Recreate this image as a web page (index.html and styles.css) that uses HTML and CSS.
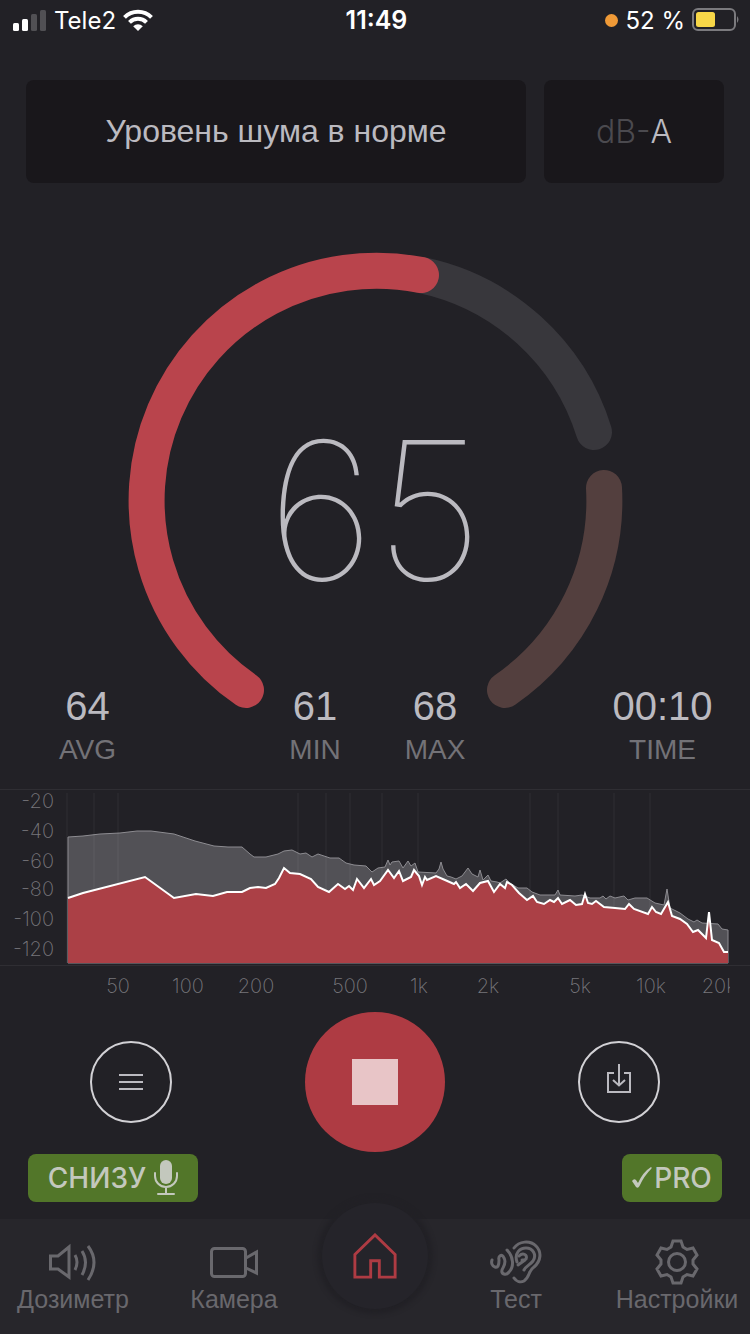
FILE: index.html
```html
<!DOCTYPE html>
<html lang="ru">
<head>
  <meta charset="UTF-8" />
  <meta name="viewport" content="width=device-width, initial-scale=1.0"/>
  <title>Шумомер</title>
  <link rel="stylesheet" href="styles.css">
</head>
<body>
<div class="app">

  <div class="status-bar">
    <div class="status-left">
      <svg width="34" height="22" viewBox="0 0 34 22" aria-hidden="true">
        <g fill="#fff">
          <rect x="0" y="14" width="6" height="8" rx="1.5"/>
          <rect x="9" y="10" width="6" height="12" rx="1.5"/>
        </g>
        <g fill="#515054">
          <rect x="18" y="5" width="6" height="17" rx="1.5"/>
          <rect x="27" y="1" width="6" height="21" rx="1.5"/>
        </g>
      </svg>
      <span>Tele2</span>
      <svg width="30" height="22" viewBox="0 0 30 22" aria-hidden="true">
        <g fill="none" stroke="#fff" stroke-width="4">
          <path d="M1.5 8.300 A19 19 0 0 1 28.500 8.300"/>
          <path d="M6.500 13.300 A12 12 0 0 1 23.500 13.300"/>
        </g>
        <path d="M15 22 L10.200 17.200 A7 7 0 0 1 19.800 17.200 Z" fill="#fff"/>
      </svg>
    </div>
    <div class="clock">11:49</div>
    <div class="status-right">
      <span class="mic-dot"></span>
      <span>52 %</span>
      <svg width="48" height="24" viewBox="0 0 48 24" aria-hidden="true">
        <rect x="1" y="1" width="42" height="21" rx="5" fill="none" stroke="#7b7a7e" stroke-width="2"/>
        <path d="M45 8 Q48 11.500 45 15 Z" fill="#7b7a7e"/>
        <rect x="4" y="4" width="19" height="15" rx="2.500" fill="#f8d748"/>
      </svg>
    </div>
  </div>

  <div class="header">
    <div class="panel level">Уровень шума в норме</div>
    <button class="panel weighting"><span class="dim">dB-</span>A</button>
  </div>

  <div class="gauge">
    <svg viewBox="0 0 500 460" aria-hidden="true">
      <g fill="none" stroke-width="36" stroke-linecap="round">
        <path class="arc-rest" d="M296 25 A230 230 0 0 1 469 182"/>
        <path class="arc-danger" d="M479 238 A230 230 0 0 1 380 440"/>
        <path class="arc-value" d="M121 440 A230 230 0 0 1 296 25"/>
      </g>
    </svg>
    <div class="gauge-value">65</div>
  </div>

  <dl class="stats">
    <div class="stat avg"><dt>AVG</dt><dd>64</dd></div>
    <div class="stat min"><dt>MIN</dt><dd>61</dd></div>
    <div class="stat max"><dt>MAX</dt><dd>68</dd></div>
    <div class="stat time"><dt>TIME</dt><dd>00:10</dd></div>
  </dl>

  <svg class="chart" viewBox="0 0 750 212" role="img" aria-label="Спектр">
    <path class="frame" d="M0 .5 H750 M0 176.500 H750"/>
    <path class="area-peak" d="M68 48 L83 47 L100 45 L120 44 L137 42 L151 42 L174 45 L195 52 L214 57 L228 58 L242 58 L250 65 L254 68 L266 68 L278 65 L284 62 L292 61 L300 65 L306 64 L312 68 L318 65 L330 69 L339 69 L346 74 L354 76 L366 77 L372 83 L378 79 L385 78 L388 71 L390 76 L392 73 L399 72 L403 79 L408 72 L411 77 L415 74 L418 83 L436 84 L439 80 L441 73 L443 80 L447 87 L451 88 L456 90 L462 87 L468 79 L472 85 L478 88 L480 81 L483 91 L488 86 L491 92 L497 93 L500 94 L506 90 L510 94 L518 99 L527 99 L532 103 L540 106 L555 106 L558 101 L560 106 L575 107 L582 106 L590 109 L600 109 L603 107 L606 110 L610 107 L615 109 L624 107 L628 111 L635 109 L647 109 L655 114 L664 116 L667 100 L670 119 L680 124 L688 130 L694 133 L697 131 L702 134 L718 135 L722 140 L728 141 V174 H68 Z"/>
    <path class="grid" d="M67 4 V174 M94 4 V174 M118 4 V174 M298 4 V174 M326 4 V174 M350 4 V174 M382 4 V174 M418 4 V174 M530 4 V174 M558 4 V174 M614 4 V174 M650 4 V174"/>
    <path class="area-now" d="M68 109 L83 104 L145 88 L174 109 L196 105 L213 107 L227 103 L242 103 L250 99 L258 98 L266 99 L275 95 L279 89 L284 79 L290 84 L300 85 L311 90 L318 98 L329 103 L338 95 L345 100 L349 97 L353 101 L357 90 L364 99 L371 90 L374 96 L380 92 L388 81 L394 89 L399 82 L403 92 L411 88 L414 81 L419 87 L422 96 L425 88 L427 91 L436 87 L445 91 L454 95 L456 93 L460 99 L466 95 L473 102 L480 94 L488 92 L494 103 L500 95 L505 99 L507 93 L512 96 L519 104 L527 111 L533 107 L537 113 L544 115 L550 111 L554 113 L558 109 L562 115 L570 111 L576 116 L582 115 L585 105 L588 114 L592 115 L596 112 L604 118 L615 119 L625 120 L629 115 L634 120 L648 125 L652 118 L656 123 L661 125 L668 113 L672 127 L680 130 L687 135 L693 143 L698 141 L706 149 L709 123 L712 151 L719 154 L724 163 L728 163 V174 H68 Z"/>
    <path class="line-now" d="M68 109 L83 104 L145 88 L174 109 L196 105 L213 107 L227 103 L242 103 L250 99 L258 98 L266 99 L275 95 L279 89 L284 79 L290 84 L300 85 L311 90 L318 98 L329 103 L338 95 L345 100 L349 97 L353 101 L357 90 L364 99 L371 90 L374 96 L380 92 L388 81 L394 89 L399 82 L403 92 L411 88 L414 81 L419 87 L422 96 L425 88 L427 91 L436 87 L445 91 L454 95 L456 93 L460 99 L466 95 L473 102 L480 94 L488 92 L494 103 L500 95 L505 99 L507 93 L512 96 L519 104 L527 111 L533 107 L537 113 L544 115 L550 111 L554 113 L558 109 L562 115 L570 111 L576 116 L582 115 L585 105 L588 114 L592 115 L596 112 L604 118 L615 119 L625 120 L629 115 L634 120 L648 125 L652 118 L656 123 L661 125 L668 113 L672 127 L680 130 L687 135 L693 143 L698 141 L706 149 L709 123 L712 151 L719 154 L724 163 L728 163"/>
    <g class="axis axis-y">
      <text x="54" y="19">-20</text>
      <text x="54" y="49">-40</text>
      <text x="54" y="79">-60</text>
      <text x="54" y="107">-80</text>
      <text x="54" y="137">-100</text>
      <text x="54" y="167">-120</text>
    </g>
    <svg class="axis axis-x" x="0" y="176" width="730" height="36">
      <text x="118" y="28">50</text>
      <text x="188" y="28">100</text>
      <text x="256" y="28">200</text>
      <text x="350" y="28">500</text>
      <text x="419" y="28">1k</text>
      <text x="488" y="28">2k</text>
      <text x="580" y="28">5k</text>
      <text x="651" y="28">10k</text>
      <text x="719" y="28">20k</text>
    </svg>
  </svg>

  <div class="controls">
    <button class="round-btn" aria-label="Журнал">
      <svg width="24" height="18" viewBox="0 0 24 18"><path d="M0 2 H24 M0 9 H24 M0 16 H24"/></svg>
    </button>
    <button class="stop-btn" aria-label="Стоп"><span></span></button>
    <button class="round-btn" aria-label="Сохранить">
      <svg width="26" height="38" viewBox="0 0 26 38"><path d="M8 10 H2 V29 H24 V10 H18 M13 1 V22 M7 17 L13 22.500 L19 17"/></svg>
    </button>
  </div>

  <div class="badges">
    <button class="badge">СНИЗУ
      <svg width="24" height="36" viewBox="0 0 24 36" aria-hidden="true">
        <rect x="6" y="0" width="12" height="24" rx="6" fill="#c3c8bd"/>
        <path d="M1 13 V16 A11 11 0 0 0 23 16 V13 M12 27 V34 M4 34 H20" fill="none" stroke="#c3c8bd" stroke-width="2" stroke-linecap="round"/>
      </svg>
    </button>
    <button class="badge pro">
      <svg width="20" height="22" viewBox="0 0 20 22" aria-hidden="true">
        <path d="M0 14 Q2 11 4 13 L6 16 Q11 5 19 0 Q20 0 19.500 1.500 Q12 9 7.500 19 Q6 22 4 20 Z" fill="#c3c8bd"/>
      </svg>PRO
    </button>
  </div>

  <nav class="tabs">
    <a href="#dosimeter">
      <svg width="48" height="40" viewBox="0 0 48 40" aria-hidden="true">
        <path d="M1.500 14 H9 L20 5 V35 L9 27 H1.500 Z M26 13 Q30 20 26 28 M33 9 Q40 20 33 33 M39 4 Q51 20 39 38"/>
      </svg>
      Дозиметр
    </a>
    <a href="#camera">
      <svg width="48" height="40" viewBox="0 0 48 40" aria-hidden="true">
        <rect x="1.500" y="6.500" width="34" height="28" rx="3"/>
        <path d="M36 16 L46.500 10 V31 L36 26"/>
      </svg>
      Камера
    </a>
    <a href="#home" class="home" aria-label="Главная">
      <svg width="46" height="48" viewBox="0 0 46 48" aria-hidden="true">
        <path d="M2 22.500 L23 2 L44 22.500 V46 H27.500 V29 H18.500 V46 H2 Z"/>
      </svg>
    </a>
    <a href="#test">
      <svg class="ear" width="52" height="44" viewBox="0 0 52 44" aria-hidden="true">
        <path d="M24 8 C29 1 40 0 46 6 C52 12 51 21 44 27 C38 31 40 37 34 41 C30 43 26 41 24 38"/>
        <path d="M27 22 C24 13 30 8 36 8 C43 8 47 15 43 21 C40 25 36 26 34 30"/>
        <path d="M29 16 C33 12 38 15 36 19 C35 20 33 20 32 20 M35 20 L28 25"/>
        <path d="M17 10 C24 17 24 27 19 32 C16 36 11 34 12 30 C13 27 17 23 14 18 C12 13 8 16 9 20 C9 25 8 28 5 27 C2 26 1 23 2 20"/>
      </svg>
      Тест
    </a>
    <a href="#settings">
      <svg width="44" height="46" viewBox="0 0 44 46" aria-hidden="true">
        <path d="M18 2 H26 L28 8 L32 10.500 L38 9 L42 16 L38 21 V25 L42 30 L38 37 L32 35.500 L28 38 L26 44 H18 L16 38 L12 35.500 L6 37 L2 30 L6 25 V21 L2 16 L6 9 L12 10.500 L16 8 Z"/>
        <circle cx="22" cy="23" r="8.500"/>
      </svg>
      Настройки
    </a>
  </nav>

</div>
</body>
</html>
```

FILE: styles.css
```css
* {
  box-sizing: border-box;
}
body {
  margin: 0;
  background: #222126;
  color: #bbbac0;
  font-family: "Liberation Sans", Arial, sans-serif;
}
button {
  padding: 0;
  border: none;
  background: none;
  color: inherit;
  font: inherit;
  cursor: pointer;
}
.app {
  display: flex;
  flex-direction: column;
  min-height: 100vh;
}

/* Status bar */
.status-bar {
  display: grid;
  grid-template-columns: 1fr auto 1fr;
  align-items: center;
  height: 40px;
  padding: 0 10px 0 13px;
  color: #fff;
  font-family: Inter, sans-serif;
  font-size: 24px;
}
.status-left,
.status-right {
  display: flex;
  align-items: center;
  gap: 7px;
}
.status-right {
  justify-content: flex-end;
}
.clock {
  font-size: 25px;
  font-weight: 600;
}
.mic-dot {
  width: 13px;
  height: 13px;
  border-radius: 50%;
  background: #f09a37;
}

/* Header panels */
.header {
  display: flex;
  gap: 18px;
  padding: 40px 26px 0;
}
.panel {
  display: flex;
  align-items: center;
  justify-content: center;
  height: 103px;
  border-radius: 8px;
  background: #19171b;
  font-size: 32px;
}
.level {
  flex: 1;
}
.weighting {
  width: 180px;
  font-family: Inter, sans-serif;
  font-optical-sizing: none;
  font-weight: 300;
}
.dim {
  color: #4b4a4f;
}

/* Gauge */
.gauge {
  display: grid;
  place-items: center;
  margin-top: 67px;
}
.gauge svg,
.gauge-value {
  grid-area: 1 / 1;
}
.gauge svg {
  width: 67%;
  max-width: 500px;
}
.arc-rest { stroke: #38373c; }
.arc-danger { stroke: #533f3e; }
.arc-value { stroke: #b9444c; }
.gauge-value {
  margin-top: 60px;
  font-family: Inter, sans-serif;
  font-size: 192px;
  font-weight: 100;
  line-height: 200px;
}

/* Stats */
.stats {
  display: grid;
  grid-template-columns: 175px 1fr 120px 120px 1fr 175px;
  margin: -26px 0 0;
  text-align: center;
}
.stat {
  display: flex;
  flex-direction: column-reverse;
  gap: 6px;
}
.max { grid-column: 4; }
.min { grid-column: 3; }
.time { grid-column: 6; }
.avg, .min, .max, .time { grid-row: 1; }
.stat dd {
  margin: 0;
  font-size: 40px;
  line-height: 44px;
}
.stat dt {
  color: #737277;
  font-size: 28px;
  line-height: 32px;
}

/* Spectrum */
.chart {
  display: block;
  width: 100%;
  margin-top: 23px;
}
.frame {
  stroke: #2f2e33;
}
.grid {
  stroke: #fff;
  stroke-opacity: .03;
  stroke-width: 2;
}
.area-peak {
  fill: #525156;
  stroke: #8d8c91;
}
.area-now {
  fill: #ab4046;
}
.line-now {
  fill: none;
  stroke: #fff;
  stroke-width: 2;
}
.axis {
  fill: #77767b;
  font-family: Inter, sans-serif;
  font-size: 20px;
  font-weight: 200;
}
.axis-y { text-anchor: end; }
.axis-x {
  overflow: hidden;
  text-anchor: middle;
}

/* Controls */
.controls {
  display: flex;
  align-items: center;
  justify-content: space-between;
  margin-top: 11px;
  padding: 0 90px;
}
.round-btn {
  display: flex;
  align-items: center;
  justify-content: center;
  width: 82px;
  height: 82px;
  border: 2px solid #d2d1d5;
  border-radius: 50%;
}
.round-btn svg {
  fill: none;
  stroke: #bbbac0;
  stroke-width: 2;
}
.stop-btn {
  display: flex;
  align-items: center;
  justify-content: center;
  width: 140px;
  height: 140px;
  border-radius: 50%;
  background: #ae3b43;
}
.stop-btn span {
  width: 46px;
  height: 46px;
  background: #e8c5c7;
}

/* Badges */
.badges {
  display: flex;
  justify-content: space-between;
  margin-top: 2px;
  padding: 0 28px;
}
.badge {
  display: flex;
  align-items: center;
  justify-content: center;
  gap: 8px;
  width: 170px;
  height: 48px;
  border-radius: 8px;
  background: #527629;
  color: #c3c8bd;
  font-family: Inter, sans-serif;
  font-size: 28px;
  font-weight: 500;
}
.pro {
  gap: 2px;
  width: 100px;
}

/* Tab bar */
.tabs {
  display: grid;
  grid-template-columns: 146px 1fr 106px 1fr 146px;
  flex: 1;
  margin-top: 17px;
  background: #27262b;
}
.tabs a {
  display: flex;
  flex-direction: column;
  align-items: center;
  padding-top: 20px;
  color: #69686d;
  font-size: 25px;
  line-height: 28px;
  text-decoration: none;
}
.tabs svg {
  height: 46px;
  fill: none;
  stroke: #69686d;
  stroke-width: 3;
}
.tabs .ear {
  stroke-linecap: round;
}
.tabs .home {
  align-self: start;
  justify-content: center;
  height: 106px;
  margin-top: -16px;
  padding: 0;
  border-radius: 50%;
  background: #25242a;
  box-shadow: 0 0 4px 5px #222126;
}
.tabs .home svg {
  stroke: #ae3b43;
  stroke-width: 3;
}
```
